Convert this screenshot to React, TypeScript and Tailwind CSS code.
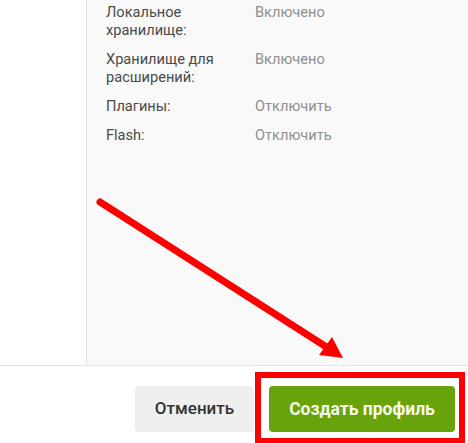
import React from 'react'

const rows = [
  { label: 'Локальное хранилище:', value: 'Включено' },
  { label: 'Хранилище для расширений:', value: 'Включено' },
  { label: 'Плагины:', value: 'Отключить' },
  { label: 'Flash:', value: 'Отключить' },
]

export default function App() {
  return (
    <div className="relative flex h-[443px] w-[468px] flex-col overflow-hidden bg-white font-['Roboto',sans-serif]">
      {/* Настройки профиля */}
      <div className="flex h-[366px] border-b border-[#e2e2e2]">
        <div className="w-[87px] border-r border-[#e2e2e2] bg-white" />
        <div className="flex-1 bg-[#f9f9f9] pl-[19px] pt-[3px]">
          <div className="flex flex-col gap-[11px]">
            {rows.map((r) => (
              <div key={r.label} className="flex text-[14.6px] leading-[18px]">
                <div className="w-[149px] pr-[9px] text-[#4a4a4a]">{r.label}</div>
                <div className="text-[#8f8f8f]">{r.value}</div>
              </div>
            ))}
          </div>
        </div>
      </div>

      {/* Кнопки */}
      <div className="flex justify-end gap-[15px] pr-[13px] pt-[20px]">
        <button className="h-[46px] w-[119px] rounded-[4px] bg-[#efefef] text-[17px] font-medium text-[#333]">
          Отменить
        </button>
        <button className="h-[46px] w-[186px] rounded-[4px] bg-[#69a30b] text-[17.5px] font-bold text-[#f6f9ea]">
          Создать профиль
        </button>
      </div>

      {/* Выделение */}
      <div className="pointer-events-none absolute left-[255px] top-[372px] h-[72px] w-[210px] border-[6px] border-[#ff0000]" />
      <svg className="pointer-events-none absolute left-0 top-0" width="468" height="443" viewBox="0 0 468 443">
        <line x1="100" y1="202" x2="328" y2="348" stroke="#ff0000" strokeWidth="7" strokeLinecap="round" />
        <polygon points="343,358 319,355 332,337" fill="#ff0000" />
      </svg>
    </div>
  )
}
